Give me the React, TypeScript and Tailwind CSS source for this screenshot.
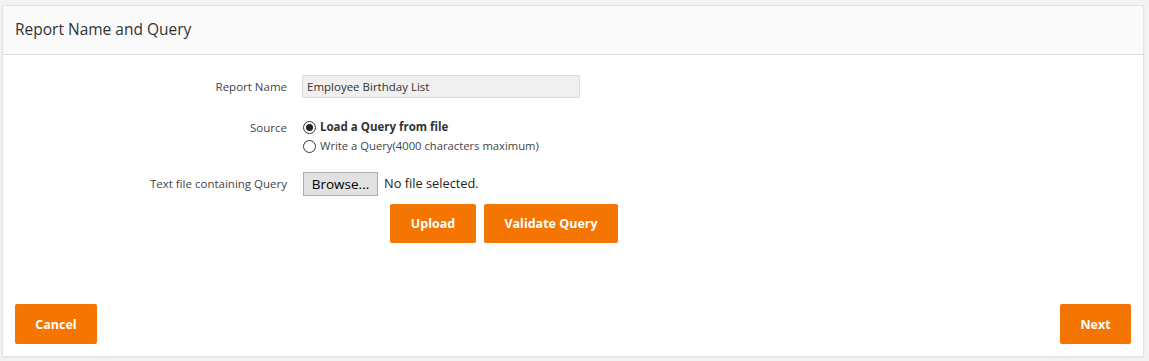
export default function App() {
  return (
    <div className="min-h-[361px] bg-[#f3f3f3] pt-[5px] pl-[2px] pr-[5px] pb-[4px] font-['Open_Sans',sans-serif]">
      <div className="flex h-[352px] flex-col border border-[#e3e3e3] bg-white shadow-[0_1px_2px_rgba(0,0,0,0.05)]">
        <div className="flex h-[49px] items-center border-b border-[#dedede] bg-[#fafafa] px-3">
          <h2 className="text-[15.5px] text-[#333]">Report Name and Query</h2>
        </div>

        <div className="flex-1 pt-[20px] text-[11.5px] text-[#444]">
          <div className="flex items-center">
            <label className="w-[284px] text-right">Report Name</label>
            <input
              readOnly
              value="Employee Birthday List"
              className="ml-[15px] h-[23px] w-[278px] rounded-[2px] border border-[#d9d9d9] bg-[#f0f0f0] px-[4px] text-[11.5px] text-[#333] outline-none"
            />
          </div>

          <div className="mt-[20px] flex">
            <label className="w-[284px] pt-[1px] text-right">Source</label>
            <div className="ml-[16px] flex flex-col gap-[1px]">
              <div className="flex h-[18px] items-center gap-[4px]">
                <span className="flex h-[13px] w-[13px] items-center justify-center rounded-full border border-[#333]">
                  <span className="h-[7px] w-[7px] rounded-full bg-[#222]" />
                </span>
                <span className="font-bold text-[#333]">Load a Query from file</span>
              </div>
              <div className="flex h-[18px] items-center gap-[4px]">
                <span className="h-[13px] w-[13px] rounded-full border border-[#333]" />
                <span className="text-[11.25px]">Write a Query(4000 characters maximum)</span>
              </div>
            </div>
          </div>

          <div className="mt-[17px] flex items-center">
            <label className="w-[284px] text-right">Text file containing Query</label>
            <div className="ml-[16px] flex items-center">
              <button className="h-[24px] w-[75px] border border-[#adadad] bg-[#e1e1e1] text-[13.5px] text-black">
                Browse...
              </button>
              <span className="ml-[6px] text-[12.8px] text-[#222]">No file selected.</span>
            </div>
          </div>

          <div className="mt-[8px] flex gap-[8px] pl-[387px]">
            <button className="h-[39px] w-[86px] rounded-[2px] bg-[#f47501] pt-[2px] text-[12.5px] font-bold text-white">
              Upload
            </button>
            <button className="h-[39px] w-[134px] rounded-[2px] bg-[#f47501] pt-[2px] text-[12.5px] font-bold text-white">
              Validate Query
            </button>
          </div>
        </div>

        <div className="flex items-center justify-between px-[12px] pb-[12px]">
          <button className="h-[40px] w-[82px] rounded-[2px] bg-[#f47501] pt-[2px] text-[12.5px] font-bold text-white">
            Cancel
          </button>
          <button className="h-[40px] w-[71px] rounded-[2px] bg-[#f47501] pt-[2px] text-[12.5px] font-bold text-white">
            Next
          </button>
        </div>
      </div>
    </div>
  );
}
